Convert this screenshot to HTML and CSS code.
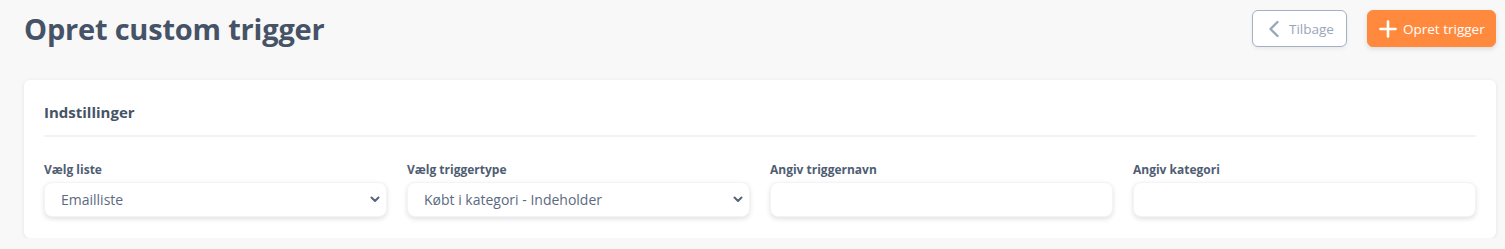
FILE: index.html
```html
<!DOCTYPE html>
<html lang="da">
<head>
<meta charset="utf-8">
<title>Opret custom trigger</title>
<link rel="stylesheet" href="styles.css">
</head>
<body>
<div class="page">
  <header class="topbar">
    <h1 class="title">Opret custom trigger</h1>
    <div class="actions">
      <button class="btn btn-outline" type="button">
        <svg class="icon" width="14" height="18" viewBox="0 0 14 18" aria-hidden="true"><path d="M10.5 2 L3.5 9 L10.5 16" fill="none" stroke="currentColor" stroke-width="2.4" stroke-linecap="round" stroke-linejoin="round"/></svg>
        <span>Tilbage</span>
      </button>
      <button class="btn btn-primary" type="button">
        <svg class="icon" width="18" height="18" viewBox="0 0 18 18" aria-hidden="true"><path d="M9 1.5 V16.5 M1.5 9 H16.5" fill="none" stroke="currentColor" stroke-width="2.6" stroke-linecap="round"/></svg>
        <span>Opret trigger</span>
      </button>
    </div>
  </header>

  <section class="card">
    <h2 class="card-title">Indstillinger</h2>
    <div class="fields">
      <div class="field">
        <label class="label">Vælg liste</label>
        <div class="control select">
          <span>Emailliste</span>
          <svg class="chev" width="10" height="7" viewBox="0 0 10 7" aria-hidden="true"><path d="M1.5 1.5 L5 5 L8.5 1.5" fill="none" stroke="currentColor" stroke-width="2" stroke-linecap="round" stroke-linejoin="round"/></svg>
        </div>
      </div>
      <div class="field">
        <label class="label">Vælg triggertype</label>
        <div class="control select">
          <span>Købt i kategori - Indeholder</span>
          <svg class="chev" width="10" height="7" viewBox="0 0 10 7" aria-hidden="true"><path d="M1.5 1.5 L5 5 L8.5 1.5" fill="none" stroke="currentColor" stroke-width="2" stroke-linecap="round" stroke-linejoin="round"/></svg>
        </div>
      </div>
      <div class="field">
        <label class="label">Angiv triggernavn</label>
        <div class="control"></div>
      </div>
      <div class="field">
        <label class="label">Angiv kategori</label>
        <div class="control"></div>
      </div>
    </div>
  </section>
</div>
</body>
</html>
```

FILE: styles.css
```css
* { box-sizing: border-box; }
html, body { margin: 0; padding: 0; }
body {
  background: #f8f8f9;
  font-family: "Open Sans", "Noto Sans", "DejaVu Sans", sans-serif;
  color: #4a5568;
}
.page {
  padding: 10px 9px 0 24px;
}
.topbar {
  display: flex;
  justify-content: space-between;
  align-items: center;
  height: 37px;
}
.title {
  margin: 0;
  font-size: 29px;
  font-weight: 700;
  color: #465366;
  letter-spacing: -0.2px;
}
.actions {
  display: flex;
  gap: 20px;
}
.btn {
  height: 37px;
  display: flex;
  align-items: center;
  gap: 6px;
  border-radius: 6px;
  font-family: inherit;
  font-size: 13.5px;
  padding: 0;
  white-space: nowrap;
  cursor: pointer;
}
.btn-outline {
  width: 95px;
  background: #ffffff;
  border: 1px solid #a3b1c2;
  color: #97a6b8;
  box-shadow: 0 2px 4px rgba(0,0,0,0.06);
  padding-left: 14px;
  gap: 8px;
}
.btn-primary {
  width: 129px;
  background: #ff8a3d;
  border: 1px solid #ff8a3d;
  color: #ffffff;
  box-shadow: 0 2px 5px rgba(0,0,0,0.12);
  padding-left: 11px;
  gap: 6px;
}
.icon { flex: none; }
.card {
  margin-top: 33px;
  background: #ffffff;
  border-radius: 6px;
  box-shadow: 0 1px 4px rgba(0,0,0,0.09);
  padding: 20px 20px 21px 20px;
}
.card-title {
  margin: 0;
  font-size: 15px;
  font-weight: 700;
  color: #465366;
  line-height: 24px;
  padding-bottom: 11px;
  border-bottom: 2px solid #f1f2f4;
}
.fields {
  display: grid;
  grid-template-columns: repeat(4, 1fr);
  gap: 20px;
  margin-top: 25px;
}
.field {
  display: flex;
  flex-direction: column;
}
.label {
  font-size: 12px;
  font-weight: 700;
  color: #4f5d72;
  line-height: 16px;
  margin-bottom: 4px;
}
.control {
  height: 35px;
  background: #ffffff;
  border-radius: 8px;
  box-shadow: 0 2px 5px rgba(0,0,0,0.12);
  border: 1px solid #f3f4f6;
  display: flex;
  align-items: center;
  padding: 0 6px 0 16px;
  font-size: 14px;
  color: #5b6a80;
}
.select {
  justify-content: space-between;
}
.chev { color: #56647a; }
```
